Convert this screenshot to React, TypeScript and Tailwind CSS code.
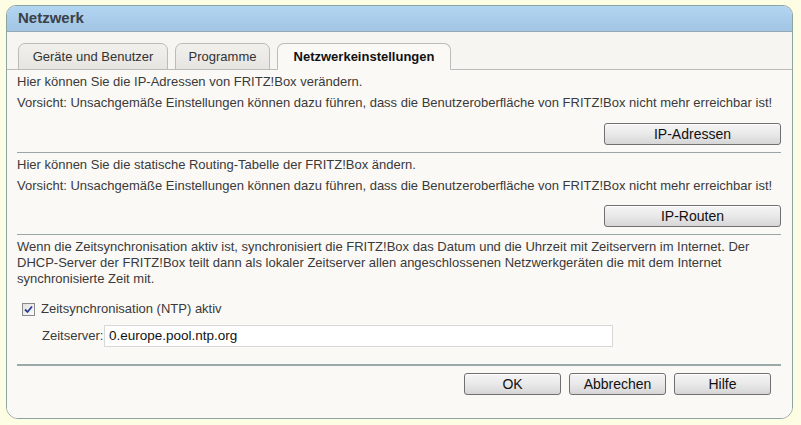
import React from "react";

const font = { fontFamily: '"Liberation Sans", Arial, sans-serif' };

function Btn({ children, className = "" }: { children: React.ReactNode; className?: string }) {
  return (
    <button
      className={`h-[22px] rounded-[3px] border border-[#707070] bg-gradient-to-b from-[#f5f5f5] via-[#e9e9e9] to-[#d6d6d6] text-[14px] leading-[20px] text-[#111] shadow-[inset_0_1px_0_#fff] ${className}`}
    >
      {children}
    </button>
  );
}

function Tab({ children, active = false, className = "" }: { children: React.ReactNode; active?: boolean; className?: string }) {
  return (
    <div
      className={`flex h-[27px] items-center justify-center rounded-t-[7px] border border-[#b9bcb8] text-[13px] ${
        active
          ? "relative z-10 border-b-[#faf9f6] bg-[#faf9f6] font-bold text-[#111]"
          : "bg-gradient-to-b from-[#f1f0ec] to-[#e6e5e0] text-[#333]"
      } ${className}`}
    >
      {children}
    </div>
  );
}

export default function App() {
  return (
    <div className="h-[425px] w-[801px] bg-[#fdfde4] pl-[6px] pt-[5px]" style={font}>
      <div className="flex h-[414px] w-[787px] flex-col overflow-hidden rounded-b-[12px] rounded-t-[10px] border border-[#8ea3a3] bg-[#f6f5f1]">
        <div className="flex h-[26px] items-center border-b border-[#93a9b3] bg-gradient-to-b from-[#b2d5f2] to-[#a1c5e3] pl-[11px] text-[15px] font-bold text-[#3b4147]">
          Netzwerk
        </div>
        <div className="flex items-end gap-[7px] pl-[11px] pt-[11px]">
          <Tab className="w-[150px]">Geräte und Benutzer</Tab>
          <Tab className="w-[95px]">Programme</Tab>
          <Tab active className="w-[174px]">
            Netzwerkeinstellungen
          </Tab>
        </div>
        <div className="-mt-px flex flex-1 flex-col border-t border-[#b9bcb8] bg-[#faf9f6] px-[10px] text-[13px] text-[#3a3a3a]">
          <div className="pt-[4px]">
            <p className="leading-[16px]">Hier können Sie die IP-Adressen von FRITZ!Box verändern.</p>
            <p className="mt-[5px] whitespace-nowrap leading-[16px]">
              Vorsicht: Unsachgemäße Einstellungen können dazu führen, dass die Benutzeroberfläche von FRITZ!Box nicht mehr erreichbar ist!
            </p>
            <div className="mt-[12px] flex justify-end pr-[1px]">
              <Btn className="w-[177px]">IP-Adressen</Btn>
            </div>
          </div>
          <div className="mr-[1px] mt-[7px] border-t border-[#9aa5a5]" />
          <div className="pt-[4px]">
            <p className="leading-[16px]">Hier können Sie die statische Routing-Tabelle der FRITZ!Box ändern.</p>
            <p className="mt-[5px] whitespace-nowrap leading-[16px]">
              Vorsicht: Unsachgemäße Einstellungen können dazu führen, dass die Benutzeroberfläche von FRITZ!Box nicht mehr erreichbar ist!
            </p>
            <div className="mt-[11px] flex justify-end pr-[1px]">
              <Btn className="w-[177px]">IP-Routen</Btn>
            </div>
          </div>
          <div className="mr-[1px] mt-[7px] border-t border-[#9aa5a5]" />
          <div className="pt-[4px]">
            <p className="mr-[-10px] leading-[16px]">
              Wenn die Zeitsynchronisation aktiv ist, synchronisiert die FRITZ!Box das Datum und die Uhrzeit mit Zeitservern im Internet. Der
              DHCP-Server der FRITZ!Box teilt dann als lokaler Zeitserver allen angeschlossenen Netzwerkgeräten die mit dem Internet
              synchronisierte Zeit mit.
            </p>
            <div className="mt-[14px] flex items-center gap-[6px] pl-[5px]">
              <div className="flex h-[13px] w-[13px] items-center justify-center border border-[#8a8a8a] bg-gradient-to-br from-[#e2e2e2] to-[#fafafa]">
                <svg width="9" height="9" viewBox="0 0 9 9">
                  <path d="M1 4.5 L3.5 7 L8 1.5" stroke="#2b3f8f" strokeWidth="1.8" fill="none" />
                </svg>
              </div>
              <span className="leading-[16px]">Zeitsynchronisation (NTP) aktiv</span>
            </div>
            <div className="mt-[8px] flex items-center pl-[25px]">
              <span className="w-[62px] whitespace-nowrap leading-[16px]">Zeitserver:</span>
              <div className="flex h-[22px] w-[509px] items-center border border-[#d8d8d8] bg-white pl-[4px] text-[13.5px] text-[#111]">
                0.europe.pool.ntp.org
              </div>
            </div>
          </div>
          <div className="mr-[1px] mt-[17px] border-t-2 border-[#9aaaa8]" />
          <div className="mt-[7px] flex justify-end gap-[8px] pr-[11px]">
            <Btn className="w-[97px]">OK</Btn>
            <Btn className="w-[97px]">Abbrechen</Btn>
            <Btn className="w-[97px]">Hilfe</Btn>
          </div>
        </div>
      </div>
    </div>
  );
}
